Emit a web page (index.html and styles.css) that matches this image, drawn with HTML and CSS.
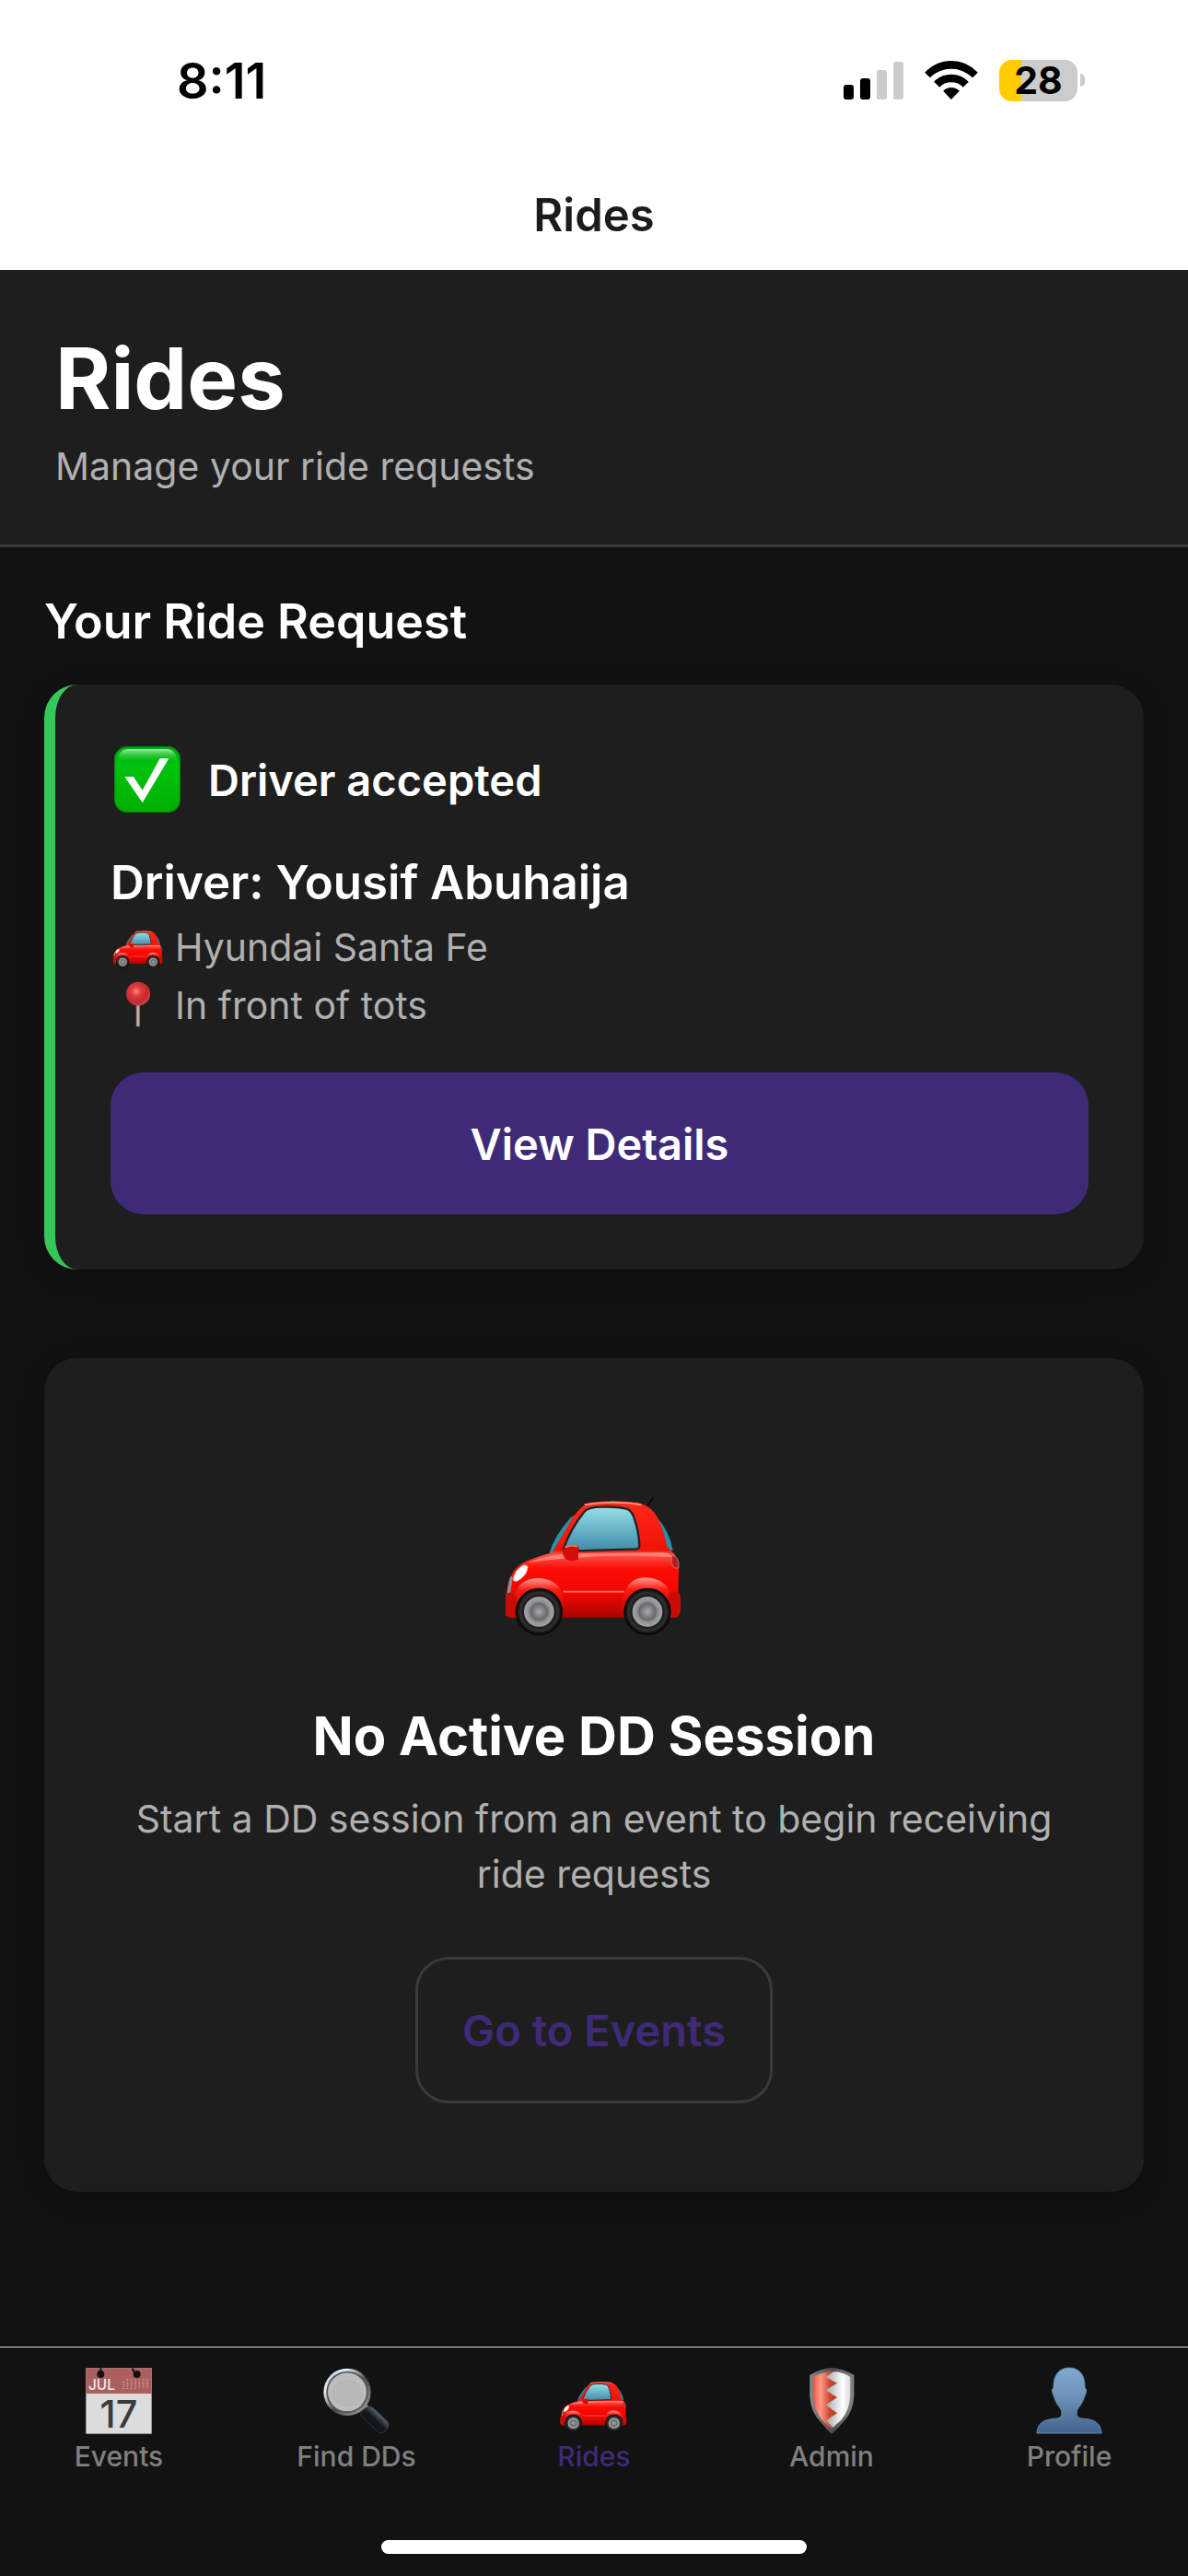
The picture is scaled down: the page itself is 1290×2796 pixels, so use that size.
FILE: index.html
```html
<!DOCTYPE html>
<html lang="en">
  <head>
    <meta charset="UTF-8" />
    <meta name="viewport" content="width=device-width, initial-scale=1.0" />
    <title>Rides</title>
    <link rel="stylesheet" href="styles.css" />
  </head>
  <body>
    <!-- Shared car drawing -->
    <svg class="sprite" aria-hidden="true">
      <defs>
        <linearGradient id="car-body" x1="0" y1="0" x2="0" y2="1">
          <stop offset="0" stop-color="#ff2a1a" />
          <stop offset="0.42" stop-color="#f01208" />
          <stop offset="0.46" stop-color="#ff5448" />
          <stop offset="0.58" stop-color="#fb0d05" />
          <stop offset="0.8" stop-color="#f00800" />
          <stop offset="1" stop-color="#a80400" />
        </linearGradient>
        <linearGradient id="car-glass" x1="0" y1="0" x2="0" y2="1">
          <stop offset="0" stop-color="#96e0e8" />
          <stop offset="1" stop-color="#3f8aa8" />
        </linearGradient>
        <linearGradient id="car-fender" x1="0" y1="0" x2="0" y2="1">
          <stop offset="0" stop-color="#ff9a90" />
          <stop offset="0.3" stop-color="#fb1a10" />
          <stop offset="1" stop-color="#b00400" />
        </linearGradient>
        <radialGradient id="car-hub">
          <stop offset="0" stop-color="#a9abad" />
          <stop offset="0.55" stop-color="#66686b" />
          <stop offset="0.7" stop-color="#8f9194" />
          <stop offset="1" stop-color="#a5a5a5" />
        </radialGradient>
        <radialGradient id="car-tire">
          <stop offset="0.6" stop-color="#111" />
          <stop offset="0.8" stop-color="#303030" />
          <stop offset="0.95" stop-color="#080808" />
        </radialGradient>
      </defs>
      <symbol id="car" viewBox="88 -30 576 576" overflow="visible">
        <path d="M548 110L568 80" stroke="#0c0c0c" stroke-width="6" stroke-linecap="round" />
        <path d="M230 262Q246 205 300 145L318 134L262 262Z" fill="#2492aa" />
        <path d="M582 145Q622 190 633 252L612 250Z" fill="#2492aa" />
        <path d="M92 390Q94 352 106 336Q118 302 158 286Q200 268 238 260Q262 222 290 172Q322 112 360 96Q440 86 520 96Q566 108 586 150Q604 190 614 238L640 266Q654 290 652 330L650 392L652 440Q652 470 630 470L250 470L108 470Q84 466 86 430Z" fill="url(#car-body)" />
        <path d="M345 103Q440 88 530 103" fill="none" stroke="#ff8a80" stroke-width="6" />
        <path d="M160 292Q220 266 300 262L600 258Q630 262 634 274Q450 262 300 278Q220 280 160 292Z" fill="#ff8d84" opacity="0.8" />
        <path d="M276 248Q300 180 344 126Q358 110 400 110Q450 108 482 116Q500 122 508 150Q522 190 524 236Q524 246 512 247L290 254Q276 254 276 248Z" fill="url(#car-glass)" stroke="#1d2426" stroke-width="7" />
        <path d="M276 386H474" stroke="#ff7a70" stroke-width="5" />
        <path d="M92 392Q100 344 104 336L112 338L104 388Z" fill="#8f8f8f" />
        <path d="M114 350Q112 318 146 300Q160 298 160 308Q156 336 124 352Z" fill="#fff" stroke="#d8b0ac" stroke-width="3" />
        <path d="M630 268Q654 270 652 308Q636 316 628 290Z" fill="#c01a18" stroke="#8a8a8a" stroke-width="3" />
        <path d="M118 400Q130 342 196 342Q264 346 276 404V470H118Z" fill="url(#car-fender)" />
        <path d="M470 404Q486 340 546 340Q614 344 626 400V470H470Z" fill="url(#car-fender)" />
        <path d="M82 402Q84 390 98 390L122 392V470H104Q82 468 82 440Z" fill="#c90c05" />
        <path d="M618 390L646 388Q658 390 658 404V446Q656 470 636 470H618Z" fill="#c90c05" />
        <path d="M280 240Q300 230 322 235Q328 238 326 252L324 282Q300 290 284 280Q274 270 274 254Z" fill="#d30d08" />
        <path d="M284 240Q300 234 320 238" fill="none" stroke="#ff6a60" stroke-width="6" stroke-linecap="round" />
        <circle cx="197" cy="451" r="77" fill="url(#car-tire)" />
        <circle cx="197" cy="451" r="49" fill="url(#car-hub)" />
        <circle cx="550" cy="451" r="77" fill="url(#car-tire)" />
        <circle cx="550" cy="451" r="49" fill="url(#car-hub)" />
      </symbol>
    </svg>

    <div class="status-bar">
      <span class="status-time">8:11</span>
      <div class="status-icons">
        <svg class="signal" viewBox="0 0 65 41" aria-hidden="true">
          <rect x="0" y="25" width="11" height="16" rx="3" />
          <rect x="18" y="18" width="11" height="23" rx="3" />
          <rect x="36" y="9" width="11" height="32" rx="3" fill="#ccc" />
          <rect x="54" y="0" width="11" height="41" rx="3" fill="#ccc" />
        </svg>
        <svg class="wifi" viewBox="431 75 173 126" aria-hidden="true">
          <path d="M431 113Q468 75 517 75Q567 75 604 113L587 130Q556 101 517 101Q478 101 448 130Z" />
          <path d="M461 143Q484 119 517 119Q551 119 574 143L556 161Q540 145 517 145Q495 145 479 161Z" />
          <path d="M491 173Q502 162 517 162Q533 162 544 173L517 201Z" />
        </svg>
        <div class="battery">
          <span class="battery-level">28</span>
        </div>
      </div>
    </div>

    <div class="nav-bar">
      <span class="nav-title">Rides</span>
    </div>

    <header class="page-header">
      <h1>Rides</h1>
      <p>Manage your ride requests</p>
    </header>

    <main class="content">
      <h2 class="section-title">Your Ride Request</h2>

      <section class="card ride-card">
        <div class="ride-status">
          <svg class="status-icon" viewBox="60 48 240 240" aria-hidden="true">
            <defs>
              <linearGradient id="check-fill" x1="0" y1="0" x2="0" y2="1">
                <stop offset="0" stop-color="#00a80c" />
                <stop offset="0.3" stop-color="#00c410" />
                <stop offset="1" stop-color="#00ae00" />
              </linearGradient>
              <linearGradient id="check-shine" x1="0" y1="0" x2="0" y2="1">
                <stop offset="0" stop-color="#a4eaa6" />
                <stop offset="1" stop-color="#00c410" stop-opacity="0" />
              </linearGradient>
            </defs>
            <rect x="74" y="62" width="212" height="212" rx="40" fill="url(#check-fill)" stroke="#048a0a" stroke-width="4" />
            <path d="M84 110Q84 69 120 69H240Q276 69 276 110Q180 118 84 110Z" fill="url(#check-shine)" />
            <path d="M106 159H135L164 203L221 100H250L164 244Z" fill="#fff" />
          </svg>
          <span>Driver accepted</span>
        </div>
        <h3 class="driver-name">Driver: Yousif Abuhaija</h3>
        <ul class="ride-info">
          <li>
            <svg class="info-icon" aria-hidden="true"><use href="#car" /></svg>
            Hyundai Santa Fe
          </li>
          <li>
            <svg class="info-icon" viewBox="68 215 162 162" aria-hidden="true">
              <defs>
                <radialGradient id="pin-ball" cx="0.42" cy="0.4" r="0.6">
                  <stop offset="0" stop-color="#ff8078" />
                  <stop offset="0.35" stop-color="#e03c3c" />
                  <stop offset="0.8" stop-color="#c3282d" />
                  <stop offset="1" stop-color="#d8455a" />
                </radialGradient>
                <linearGradient id="pin-stick">
                  <stop offset="0" stop-color="#6e5450" />
                  <stop offset="0.5" stop-color="#d8c8c4" />
                  <stop offset="1" stop-color="#6a5650" />
                </linearGradient>
              </defs>
              <rect x="142" y="296" width="13" height="76" rx="3" fill="url(#pin-stick)" />
              <circle cx="149" cy="265" r="39" fill="url(#pin-ball)" />
              <path d="M143 280H155V303H143Z" fill="#b5303a" opacity="0.6" />
            </svg>
            In front of tots
          </li>
        </ul>
        <button type="button" class="btn btn-primary">View Details</button>
      </section>

      <section class="card empty-card">
        <div class="empty-icon">
          <svg aria-hidden="true"><use href="#car" /></svg>
        </div>
        <h2>No Active DD Session</h2>
        <p>Start a DD session from an event to begin receiving ride requests</p>
        <button type="button" class="btn btn-outline">Go to Events</button>
      </section>
    </main>

    <nav class="tab-bar">
      <ul class="tabs">
        <li>
          <a href="#events">
            <svg viewBox="279 120 216 216" aria-hidden="true">
              <rect x="280" y="121" width="214" height="214" fill="#dcdcdc" />
              <rect x="280" y="121" width="214" height="83" fill="#ab5f5f" />
              <circle cx="328" cy="141" r="12" fill="#121212" />
              <circle cx="446" cy="141" r="12" fill="#121212" />
              <path d="M328 121V140M432 121Q434 134 446 140" fill="none" stroke="#121212" stroke-width="6" />
              <path d="M402 166V192M415 157V192M428 157V192M441 157V192M454 157V186M467 157V186M480 157V186" stroke="#d9a9a9" stroke-width="5" stroke-dasharray="3 4" />
              <text x="288" y="192" class="cal-month">JUL</text>
              <text x="387" y="314" class="cal-day">17</text>
            </svg>
            Events
          </a>
        </li>
        <li>
          <a href="#find">
            <svg viewBox="1053 119 216 216" aria-hidden="true">
              <defs>
                <linearGradient id="lens-ring" x1="0" y1="0" x2="1" y2="1">
                  <stop offset="0" stop-color="#8fb4d8" />
                  <stop offset="0.25" stop-color="#e8eef2" />
                  <stop offset="0.55" stop-color="#4a4a4a" />
                  <stop offset="1" stop-color="#b5aca4" />
                </linearGradient>
                <linearGradient id="lens-handle" x1="0" y1="1" x2="1" y2="0">
                  <stop offset="0" stop-color="#08090b" />
                  <stop offset="0.5" stop-color="#15181d" />
                  <stop offset="0.7" stop-color="#5d656e" />
                  <stop offset="1" stop-color="#15181d" />
                </linearGradient>
              </defs>
              <path d="M1180 250L1196 240L1206 250L1190 264Z" fill="#a9a9a9" />
              <path d="M1178 264Q1188 246 1206 244Q1216 246 1264 296Q1272 310 1258 322Q1244 336 1232 328L1178 276Q1172 270 1178 264Z" fill="url(#lens-handle)" stroke="#30343a" stroke-width="3" />
              <circle cx="1131" cy="198" r="77" fill="url(#lens-ring)" />
              <circle cx="1131" cy="198" r="68" fill="#4f5254" />
              <circle cx="1131" cy="198" r="63" fill="#bdbdbd" />
              <ellipse cx="1131" cy="203" rx="52" ry="44" fill="#b7b7b7" />
            </svg>
            Find DDs
          </a>
        </li>
        <li>
          <a href="#rides" class="active" aria-current="page">
            <svg aria-hidden="true"><use href="#car" /></svg>
            Rides
          </a>
        </li>
        <li>
          <a href="#admin">
            <svg viewBox="81 60 216 216" aria-hidden="true">
              <defs>
                <linearGradient id="shield-rim">
                  <stop offset="0" stop-color="#8a8a8a" />
                  <stop offset="0.5" stop-color="#4d4d4d" />
                  <stop offset="1" stop-color="#858585" />
                </linearGradient>
                <linearGradient id="shield-red">
                  <stop offset="0" stop-color="#f0553f" />
                  <stop offset="0.3" stop-color="#ff9a8a" />
                  <stop offset="0.7" stop-color="#c9452e" />
                  <stop offset="1" stop-color="#b83a22" />
                </linearGradient>
                <linearGradient id="shield-white">
                  <stop offset="0" stop-color="#9ea3a8" />
                  <stop offset="0.7" stop-color="#fff" />
                  <stop offset="1" stop-color="#d8dadc" />
                </linearGradient>
              </defs>
              <path d="M118 84Q155 62 189 60Q225 62 262 84V150Q260 205 226 238Q205 262 189 276Q174 262 154 238Q120 205 118 150Z" fill="url(#shield-rim)" />
              <path d="M170 76Q215 66 250 90V150Q248 198 220 230L189 258L168 232Z" fill="url(#shield-white)" />
              <path d="M130 90Q160 72 198 72L170 90L207 110L170 133L207 157L170 181L207 208L171 232L194 255L189 259Q176 250 158 230Q131 198 130 150Z" fill="url(#shield-red)" />
            </svg>
            Admin
          </a>
        </li>
        <li>
          <a href="#profile">
            <svg viewBox="0 0 72 72" aria-hidden="true">
              <defs>
                <linearGradient id="person" x1="0" y1="0" x2="0" y2="1">
                  <stop offset="0" stop-color="#7fa9cf" />
                  <stop offset="0.4" stop-color="#6f96ba" />
                  <stop offset="1" stop-color="#42638c" />
                </linearGradient>
              </defs>
              <path d="M36 0C47 0 53 8 53 20V22C56 23 54 29 52.500 31C51 38 47 42 45 45C43 50 44 54 49 55C60 56 70 57 71 71H1C2 57 12 56 23 55C28 54 29 50 27 45C25 42 21 38 19.500 31C18 29 16 23 19 22V20C19 8 25 0 36 0Z" fill="url(#person)" stroke="#5f8db0" stroke-width="1" />
            </svg>
            Profile
          </a>
        </li>
      </ul>
      <div class="home-indicator"></div>
    </nav>
  </body>
</html>
```
FILE: styles.css
```css
/* Global */
* {
  box-sizing: border-box;
}

body {
  margin: 0;
  min-height: 100vh;
  display: flex;
  flex-direction: column;
  font-family: Inter, "Liberation Sans", sans-serif;
  color: #fff;
  background: #121212;
}

h1,
h2,
h3,
p,
ul {
  margin: 0;
  padding: 0;
}

ul {
  list-style: none;
}

.sprite {
  position: absolute;
  width: 0;
  height: 0;
}

/* Status bar */
.status-bar {
  display: flex;
  justify-content: space-between;
  align-items: center;
  height: 174px;
  padding: 0 120px 0 192px;
  color: #000;
  background: #fff;
}

.status-time {
  font-size: 54px;
  font-weight: 600;
}

.status-icons {
  display: flex;
  align-items: center;
  gap: 23px;
}

.signal {
  width: 65px;
  height: 41px;
}

.wifi {
  width: 58px;
  height: 42px;
}

.battery {
  position: relative;
  display: flex;
  align-items: center;
  justify-content: center;
  width: 85px;
  height: 45px;
  border-radius: 14px;
  background: linear-gradient(to right, #ffcc00 28%, #ccc 28%);
}

.battery::after {
  content: "";
  position: absolute;
  left: 88px;
  width: 5px;
  height: 14px;
  border-radius: 0 5px 5px 0;
  background: #ccc;
}

.battery-level {
  font-size: 41px;
  font-weight: 700;
}

/* Nav bar */
.nav-bar {
  display: flex;
  align-items: center;
  justify-content: center;
  height: 119px;
  color: #1c1c1e;
  background: #fff;
}

.nav-title {
  font-size: 49px;
  font-weight: 600;
}

/* Page header */
.page-header {
  padding: 60px;
  background: #1e1e1e;
  border-bottom: 3px solid #3a3a3a;
}

.page-header h1 {
  margin-bottom: 12px;
  font-size: 92px;
  line-height: 116px;
}

.page-header p {
  font-size: 41px;
  line-height: 50px;
  color: #b0b0b0;
}

/* Content */
.content {
  flex: 1;
  padding: 48px;
}

.section-title {
  margin-bottom: 36px;
  font-size: 52px;
  font-weight: 600;
  line-height: 65px;
}

.card {
  border-radius: 36px;
  background: #1e1e1e;
  box-shadow: 0 6px 24px rgba(0, 0, 0, 0.3);
}

.ride-card {
  margin-bottom: 96px;
  padding: 60px;
  border-left: 12px solid #34c759;
}

.ride-status {
  display: flex;
  align-items: center;
  gap: 26px;
  height: 86px;
  margin-bottom: 30px;
  font-size: 47px;
  font-weight: 600;
}

.status-icon {
  width: 80px;
  height: 80px;
}

.driver-name {
  font-size: 51px;
  font-weight: 600;
  line-height: 78px;
}

.ride-info {
  margin-bottom: 41px;
  font-size: 41px;
  line-height: 63px;
  color: #b0b0b0;
}

.ride-info li {
  display: flex;
  align-items: center;
  gap: 13px;
}

.info-icon {
  width: 54px;
  height: 54px;
  margin: 0 0 6px 3px;
}

/* Buttons */
.btn {
  font-family: inherit;
  font-size: 47px;
  font-weight: 600;
  border-radius: 36px;
}

.btn-primary {
  display: block;
  width: 100%;
  height: 154px;
  border: none;
  color: #fff;
  background: #3f2a78;
}

.btn-outline {
  height: 159px;
  padding: 0 48px;
  border: 3px solid #3a3a3a;
  color: #3f2a78;
  background: transparent;
}

/* Empty state */
.empty-card {
  padding: 96px;
  text-align: center;
}

.empty-icon {
  display: flex;
  align-items: center;
  justify-content: center;
  height: 230px;
  margin-bottom: 48px;
}

.empty-icon svg {
  width: 192px;
  height: 192px;
}

.empty-card h2 {
  margin-bottom: 24px;
  font-size: 58px;
  line-height: 72px;
}

.empty-card p {
  margin-bottom: 60px;
  font-size: 41px;
  line-height: 60px;
  color: #b0b0b0;
}

/* Tab bar */
.tab-bar {
  padding: 22px 0 24px;
  border-top: 1px solid #d8d8d8;
  background: #121212;
}

.tabs {
  display: flex;
  margin-bottom: 73px;
}

.tabs li {
  flex: 1;
}

.tabs a {
  display: flex;
  flex-direction: column;
  align-items: center;
  gap: 6px;
  font-size: 30px;
  font-weight: 500;
  line-height: 36px;
  color: #808080;
  text-decoration: none;
}

.tabs a.active {
  color: #3f2a78;
}

.tabs svg {
  width: 72px;
  height: 72px;
  overflow: visible;
}

.cal-month {
  font-size: 46px;
  fill: #eee;
}

.cal-day {
  font-size: 124px;
  font-weight: 500;
  text-anchor: middle;
  fill: #3a3a3a;
}

.home-indicator {
  width: 462px;
  max-width: 36%;
  height: 15px;
  margin: 0 auto;
  border-radius: 8px;
  background: #fff;
}
```
